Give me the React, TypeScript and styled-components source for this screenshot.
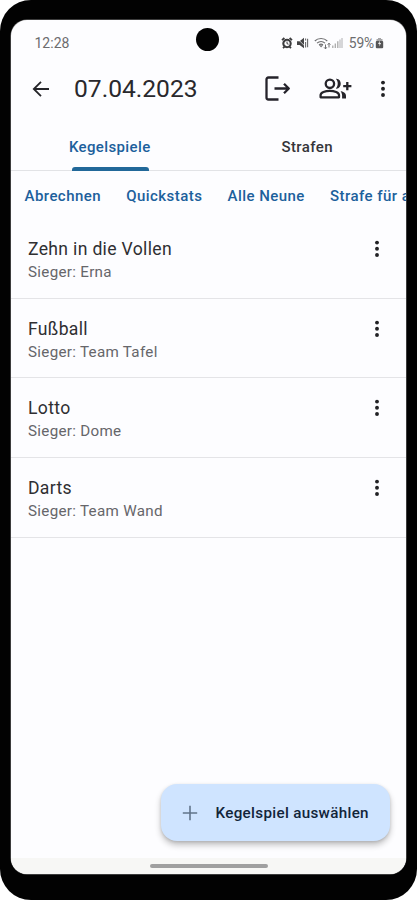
import React from "react";
import styled, { createGlobalStyle } from "styled-components";

const GlobalStyle = createGlobalStyle`
  *, *::before, *::after { box-sizing: border-box; }
  body { margin: 0; background: #fff; font-family: Roboto, "Noto Sans", sans-serif; }
  svg { display: block; flex: none; }
  button { border: 0; padding: 0; background: none; font: inherit; color: inherit; }
`;

const Phone = styled.div`
  width: 417px;
  height: 900px;
  padding: 20px 11px 26px;
  background: #020202;
  border-radius: 31px;
  overflow: hidden;
`;

const Screen = styled.main`
  position: relative;
  display: flex;
  flex-direction: column;
  width: 395px;
  height: 854px;
  background: #fdfdff;
  border-radius: 16px;
  overflow: hidden;
  box-shadow: 0 0 0 0.5px #777;
`;

const Camera = styled.div`
  position: absolute;
  left: 185px;
  top: 8px;
  width: 23px;
  height: 23px;
  border-radius: 50%;
  background: #020202;
`;

const StatusBar = styled.header`
  display: flex;
  align-items: center;
  justify-content: space-between;
  height: 46px;
  padding: 0 22px 0 23.5px;
  color: #6c6c6e;
  font-size: 14px;
`;

const StatusIcons = styled.div`
  display: flex;
  align-items: center;
`;

const StatusItem = styled.span<{ $gap: number }>`
  margin-left: ${(p) => p.$gap}px;
`;

const Battery = styled.span`
  margin: 0 1px 0 6px;
  font-size: 13.8px;
  letter-spacing: -0.15px;
`;

const AppBar = styled.div`
  display: flex;
  align-items: center;
  height: 46px;
  padding: 0 13px 0 18px;
  color: #29282c;
`;

const Title = styled.h1`
  flex: 1;
  margin: 0 0 0 21px;
  font-size: 24.6px;
  font-weight: 400;
  line-height: 46px;
`;

const Action = styled.button<{ $gap: number }>`
  margin-left: ${(p) => p.$gap}px;
`;

const Tabs = styled.nav`
  display: grid;
  grid-template-columns: 1fr 1fr;
  flex: none;
  height: 59px;
  border-bottom: 1px solid #e2e3e6;
`;

const Tab = styled.button<{ $active?: boolean }>`
  position: relative;
  padding-top: 11px;
  font-size: 15px;
  font-weight: 500;
  letter-spacing: ${(p) => (p.$active ? 0.38 : 0.42)}px;
  color: ${(p) => (p.$active ? "#1c609c" : "#35353a")};
`;

const Indicator = styled.span`
  position: absolute;
  left: 61px;
  bottom: -1px;
  width: 77px;
  height: 4px;
  border-radius: 3px 3px 0 0;
  background: #216899;
`;

const Shortcuts = styled.div`
  display: flex;
  align-items: center;
  flex: none;
  gap: 25.2px;
  height: 48px;
  padding: 1px 0 0 13.5px;
  overflow: hidden;
`;

const Shortcut = styled.button`
  flex: none;
  color: #1c609c;
  font-size: 15px;
  font-weight: 500;
  letter-spacing: 0.45px;
  white-space: nowrap;
`;

const List = styled.ul`
  flex: 1;
  margin: 0;
  padding: 0;
  list-style: none;
`;

const Row = styled.li`
  display: flex;
  justify-content: space-between;
  height: 79.65px;
  padding: 19.2px 19px 0 17px;
  border-bottom: 1px solid #e4e4e7;
`;

const Name = styled.div`
  color: #2f2f32;
  font-size: 17.6px;
  line-height: 23px;
  letter-spacing: 0.32px;
`;

const Winner = styled.div`
  color: #66666a;
  font-size: 15.2px;
  line-height: 23px;
  letter-spacing: 0.29px;
`;

const More = styled.button`
  height: 24px;
  margin-top: -1px;
`;

const Fab = styled.button`
  position: absolute;
  right: 16px;
  bottom: 33px;
  display: flex;
  align-items: center;
  gap: 17.5px;
  width: 229px;
  height: 57px;
  padding-left: 21px;
  border-radius: 16px;
  background: #cfe4ff;
  box-shadow: 0 4px 6px rgba(0, 0, 0, 0.24), 0 1px 3px rgba(0, 0, 0, 0.12);
  color: #12243a;
  font-size: 15.2px;
  font-weight: 500;
  letter-spacing: 0.32px;
  white-space: nowrap;
`;

const NavBar = styled.footer`
  display: flex;
  justify-content: center;
  flex: none;
  height: 16px;
  padding-top: 5.5px;
  background: #f7f7f5;
`;

const Handle = styled.div`
  width: 118px;
  height: 4px;
  border-radius: 2px;
  background: #a0a0a0;
`;

const AlarmIcon = () => (
  <svg width="12" height="12" viewBox="0 0 12 12" fill="none" stroke="#3b3b3d">
    <circle cx="6" cy="6.5" r="3.7" strokeWidth="2.1" />
    <path d="M1 3.2 3.4 1M11 3.2 8.6 1M2 11.2l1.6-1.5M10 11.2 8.4 9.7" strokeWidth="1.8" />
    <path d="M6 4.5v2.2l1.5.5" strokeWidth="1" />
  </svg>
);

const MuteIcon = () => (
  <svg width="12" height="12" viewBox="0 0 12 12">
    <path d="M0 4.2h2.6L7 .8v10.4L2.6 8H0Z" fill="#454547" />
    <path d="M.5 1.8 9.8 11" stroke="#fdfdff" strokeWidth=".7" />
    <path d="M8.6 1.5v2M8.6 5v5.5M10.6 1.8v8.4" stroke="#68686a" strokeWidth="1.1" />
  </svg>
);

const WifiIcon = () => (
  <svg width="17" height="13" viewBox="0 0 17 13" fill="none" stroke="#707072">
    <path d="M.8 4C4 .6 10 .6 13.3 4M3 6.2c2.4-2.3 5.8-2.3 8 0M5 8c1.3-1.1 2.8-1.1 4 0" strokeWidth="1.1" />
    <path d="m5.5 8.4 1.6 1.8 1.6-1.8Z" fill="#707072" strokeWidth=".4" />
    <path d="M11.5 7.5V12M10 10.3l1.5 1.6 1.3-1.6M15 10.5V6.2M13.7 7.7 15 6.2l1.4 1.5" strokeWidth="1" />
  </svg>
);

const SignalIcon = () => (
  <svg width="11" height="12" viewBox="0 0 11 12">
    <path d="M.8 11V8.5M3.3 11V6.5M5.8 11V4.2" stroke="#aaa" strokeWidth="1.3" />
    <path d="M8 11V2.5M10 11V1" stroke="#c2c2c4" strokeWidth="1.3" />
  </svg>
);

const BatteryIcon = () => (
  <svg width="9" height="12" viewBox="0 0 9 12">
    <path d="M3 1h3v1h1.5v3H1.5V2H3Z" fill="#a5a5a7" />
    <rect x=".8" y="4" width="7.4" height="7.2" rx="1" fill="#555557" />
    <path d="M5 3.5 3 7h1.5L4 9.5 6.2 6H4.7Z" fill="#eee" />
  </svg>
);

const BackIcon = () => (
  <svg width="24" height="24" viewBox="0 0 24 24" fill="none" stroke="#252529" strokeWidth="1.8">
    <path d="M20 12H5M12 4.8 4.8 12l7.2 7.2" />
  </svg>
);

const ExitIcon = () => (
  <svg width="26" height="26" viewBox="0 0 26 26" fill="none" stroke="#25232b" strokeWidth="2.3" strokeLinejoin="round">
    <path d="M13.5 1.5h-10Q1.5 1.5 1.5 3.5v18q0 2 2 2h10M9.5 12.5h14M19 7.7l4.8 4.8-4.8 4.8" />
  </svg>
);

const AddPeopleIcon = () => (
  <svg width="34" height="22" viewBox="0 0 34 22" fill="none" stroke="#25242a" strokeWidth="2.3">
    <circle cx="10.9" cy="5.8" r="4.2" />
    <path d="M1.6 19.3v-2.2c0-2.5 4.6-4.2 9.2-4.2s9.2 1.7 9.2 4.2v2.2Z" strokeLinejoin="round" />
    <path d="M16.8.8c6.6-.8 6.6 10.6 0 9.8 2.6-2.7 2.6-7.1 0-9.8ZM21.6 13c3.3.8 5.4 2.4 5.4 4.7v2.8h-3.9v-3c0-1.7-.7-3.1-1.5-4.5Z" fill="#25242a" stroke="none" />
    <path d="M24.2 8.1h8.2M28.3 4v8.2" />
  </svg>
);

const DotsIcon = () => (
  <svg width="20" height="24" viewBox="0 0 20 24" fill="#222225">
    <circle cx="10" cy="5.6" r="1.95" />
    <circle cx="10" cy="11.8" r="1.95" />
    <circle cx="10" cy="18" r="1.95" />
  </svg>
);

const PlusIcon = () => (
  <svg width="16" height="16" viewBox="0 0 16 16" stroke="#61748b" strokeWidth="1.6">
    <path d="M8 .8v14.4M.8 8h14.4" />
  </svg>
);

const games = [
  { name: "Zehn in die Vollen", winner: "Erna" },
  { name: "Fußball", winner: "Team Tafel" },
  { name: "Lotto", winner: "Dome" },
  { name: "Darts", winner: "Team Wand" },
];

const shortcuts = ["Abrechnen", "Quickstats", "Alle Neune", "Strafe für a"];

export default function App() {
  return (
    <>
      <GlobalStyle />
      <Phone>
        <Screen>
          <StatusBar>
            <span>12:28</span>
            <StatusIcons>
              <AlarmIcon />
              <StatusItem $gap={4}><MuteIcon /></StatusItem>
              <StatusItem $gap={4.5}><WifiIcon /></StatusItem>
              <StatusItem $gap={1}><SignalIcon /></StatusItem>
              <Battery>59%</Battery>
              <BatteryIcon />
            </StatusIcons>
          </StatusBar>
          <AppBar>
            <Action $gap={0} aria-label="Zurück"><BackIcon /></Action>
            <Title>07.04.2023</Title>
            <Action $gap={0} aria-label="Verlassen"><ExitIcon /></Action>
            <Action $gap={27.5} aria-label="Personen hinzufügen"><AddPeopleIcon /></Action>
            <Action $gap={20.5} aria-label="Mehr"><DotsIcon /></Action>
          </AppBar>
          <Tabs>
            <Tab $active>Kegelspiele<Indicator /></Tab>
            <Tab>Strafen</Tab>
          </Tabs>
          <Shortcuts>
            {shortcuts.map((label) => <Shortcut key={label}>{label}</Shortcut>)}
          </Shortcuts>
          <List>
            {games.map((game) => (
              <Row key={game.name}>
                <div>
                  <Name>{game.name}</Name>
                  <Winner>Sieger: {game.winner}</Winner>
                </div>
                <More aria-label="Mehr"><DotsIcon /></More>
              </Row>
            ))}
          </List>
          <NavBar><Handle /></NavBar>
          <Camera />
          <Fab><PlusIcon />Kegelspiel auswählen</Fab>
        </Screen>
      </Phone>
    </>
  );
}
